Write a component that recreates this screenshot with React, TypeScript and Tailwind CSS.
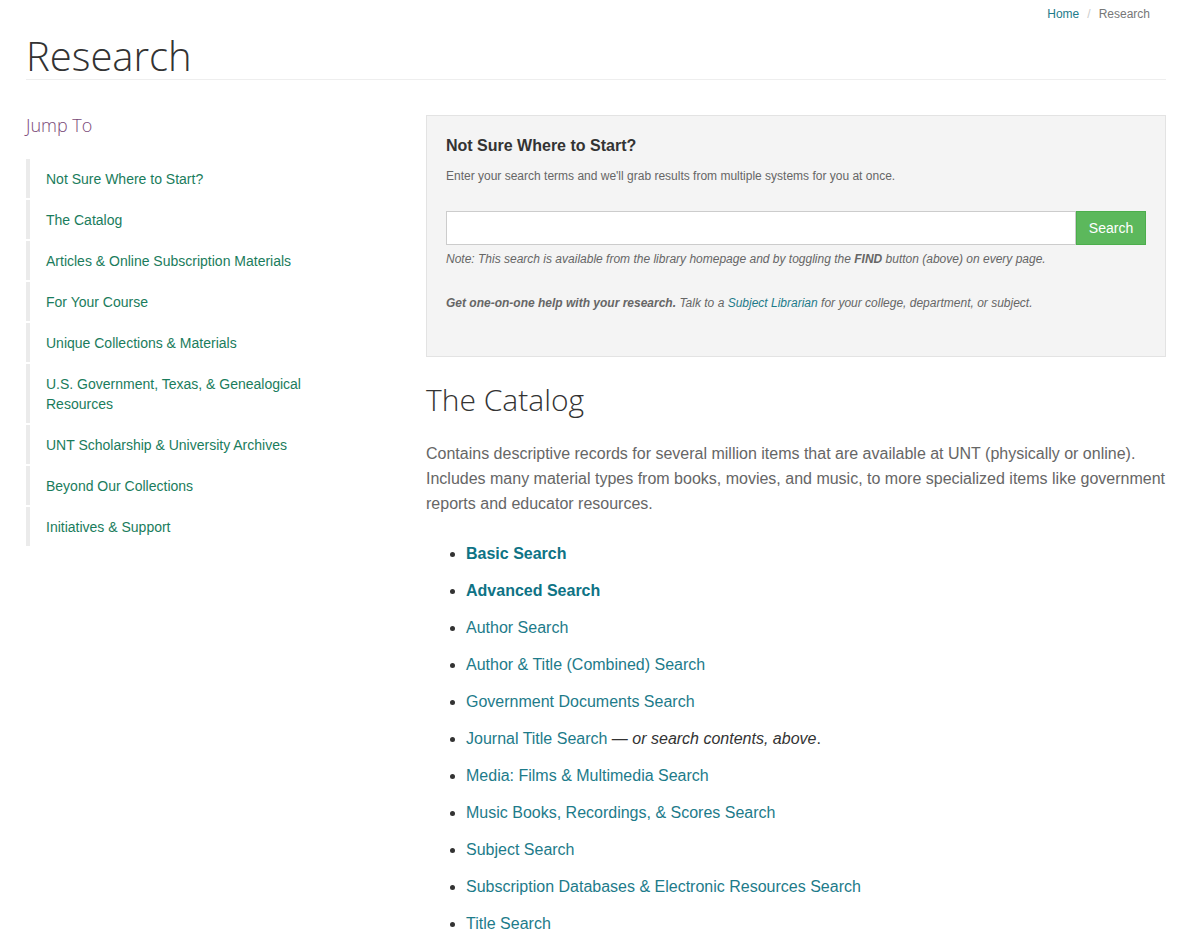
const navItems = [
  ["Not Sure Where to Start?"],
  ["The Catalog"],
  ["Articles & Online Subscription Materials"],
  ["For Your Course"],
  ["Unique Collections & Materials"],
  ["U.S. Government, Texas, & Genealogical", "Resources"],
  ["UNT Scholarship & University Archives"],
  ["Beyond Our Collections"],
  ["Initiatives & Support"],
];

const catalogLinks = [
  "Author Search",
  "Author & Title (Combined) Search",
  "Government Documents Search",
];

const moreLinks = [
  "Media: Films & Multimedia Search",
  "Music Books, Recordings, & Scores Search",
  "Subject Search",
  "Subscription Databases & Electronic Resources Search",
  "Title Search",
];

const sans = "font-['Liberation_Sans',Arial,sans-serif]";

export default function App() {
  return (
    <div className={`min-h-screen bg-white ${sans} text-[#333]`}>
      <div className="mx-[26px] w-[1140px]">
        {/* breadcrumb */}
        <div className="flex justify-end gap-[8px] pr-[16px] pt-[6px] text-[12px] leading-[16px]">
          <a className="text-[#1d7b8a]">Home</a>
          <span className="text-[#ccc]">/</span>
          <span className="text-[#777]">Research</span>
        </div>

        {/* title */}
        <h1 className="mt-[12px] border-b border-[#eee] pb-[1px] font-['Open_Sans',sans-serif] text-[40px] font-light leading-[44px] text-[#333]">
          Research
        </h1>

        <div className="mt-[34px] flex">
          {/* left nav */}
          <aside className="w-[400px] shrink-0">
            <h2 className="font-['Open_Sans',sans-serif] text-[18px] font-light leading-[22px] text-[#7a4a78]">
              Jump To
            </h2>
            <ul className="mt-[23px] flex w-[330px] flex-col gap-[2px]">
              {navItems.map((lines) => (
                <li
                  key={lines[0]}
                  className="border-l-[4px] border-[#ebebeb] py-[9.5px] pl-[16px] text-[14px] leading-[20px] text-[#1a7c5c]"
                >
                  <a>
                    {lines.map((l, i) => (
                      <span key={i} className="block">
                        {l}
                      </span>
                    ))}
                  </a>
                </li>
              ))}
            </ul>
          </aside>

          {/* main */}
          <main className="w-[740px]">
            <section className="mt-[1px] h-[242px] border border-[#e3e3e3] bg-[#f4f4f4] px-[19px] pt-[20px]">
              <h3 className="text-[16px] font-bold leading-[20px] text-[#333]">
                Not Sure Where to Start?
              </h3>
              <p className="mt-[10px] text-[12px] leading-[20px] text-[#666]">
                Enter your search terms and we'll grab results from multiple systems for you at once.
              </p>
              <div className="mt-[25px] flex h-[34px]">
                <input
                  className="h-full flex-1 border border-[#ccc] bg-white px-[10px] text-[14px] outline-none"
                  type="text"
                />
                <button className="h-full w-[70px] border border-[#4cae4c] bg-[#5cb85c] text-[14px] text-white">
                  Search
                </button>
              </div>
              <p className="mt-[4px] text-[12px] italic leading-[20px] text-[#666]">
                Note: This search is available from the library homepage and by toggling the{" "}
                <b>FIND</b> button (above) on every page.
              </p>
              <p className="mt-[24px] text-[12px] italic leading-[20px] text-[#666]">
                <b>Get one-on-one help with your research.</b> Talk to a{" "}
                <a className="text-[#1d7b8a]">Subject Librarian</a> for your college, department, or
                subject.
              </p>
            </section>

            <h2 className="mt-[23px] font-['Open_Sans',sans-serif] text-[30px] font-light leading-[40px] text-[#333]">
              The Catalog
            </h2>
            <p className="mt-[21px] text-[16px] leading-[25px] text-[#666]">
              Contains descriptive records for several million items that are available at UNT
              (physically or online). Includes many material types from books, movies, and music, to
              more specialized items like government reports and educator resources.
            </p>

            <ul className="mt-[28px] flex list-disc flex-col gap-[17px] pl-[40px] text-[16px] leading-[20px] marker:text-[#333]">
              <li>
                <a className="font-bold text-[#0e7385]">Basic Search</a>
              </li>
              <li>
                <a className="font-bold text-[#0e7385]">Advanced Search</a>
              </li>
              {catalogLinks.map((t) => (
                <li key={t}>
                  <a className="text-[#1d7b8a]">{t}</a>
                </li>
              ))}
              <li>
                <a className="text-[#1d7b8a]">Journal Title Search</a>{" "}
                <span className="text-[#333]">
                  — <i>or search contents, above</i>.
                </span>
              </li>
              {moreLinks.map((t) => (
                <li key={t}>
                  <a className="text-[#1d7b8a]">{t}</a>
                </li>
              ))}
            </ul>
          </main>
        </div>
      </div>
    </div>
  );
}
